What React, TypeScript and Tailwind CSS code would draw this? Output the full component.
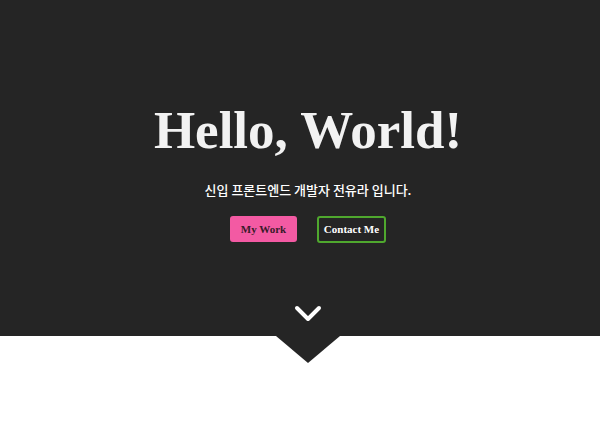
import React from "react";

export default function App() {
  return (
    <div className="w-[600px] h-[448px] bg-white overflow-hidden">
      <section className="relative h-[336px] bg-[#252525] flex flex-col items-center pl-[16px]">
        <h1 className="mt-[100px] text-[53px] leading-[60px] font-bold text-[#f2f2f2]" style={{ fontFamily: '"Liberation Serif", serif' }}>
          Hello, World!
        </h1>
        <p className="mt-[20px] text-[13px] leading-[20px] font-medium text-white" style={{ fontFamily: '"Noto Sans CJK KR", "Noto Sans", sans-serif' }}>
          신입 프론트엔드 개발자 전유라 입니다.
        </p>
        <div className="mt-[16px] flex gap-[20px]" style={{ fontFamily: '"Liberation Serif", serif' }}>
          <button className="w-[67px] h-[26px] rounded-[3px] bg-[#f35aa3] text-[#3a1a2a] text-[11px] font-bold">My Work</button>
          <button className="w-[69px] h-[27px] rounded-[3px] border-2 border-[#4fa82e] text-white text-[11px] font-bold">Contact Me</button>
        </div>
        <svg className="mt-[62px]" width="28" height="18" viewBox="0 0 28 18">
          <path d="M3 3 L14 14 L25 3" stroke="#ffffff" strokeWidth="4" fill="none" strokeLinecap="round" strokeLinejoin="round" />
        </svg>
        <div className="absolute left-[276px] top-[336px] w-0 h-0 border-l-[32px] border-r-[32px] border-t-[27px] border-l-transparent border-r-transparent border-t-[#252525]" />
      </section>
    </div>
  );
}
